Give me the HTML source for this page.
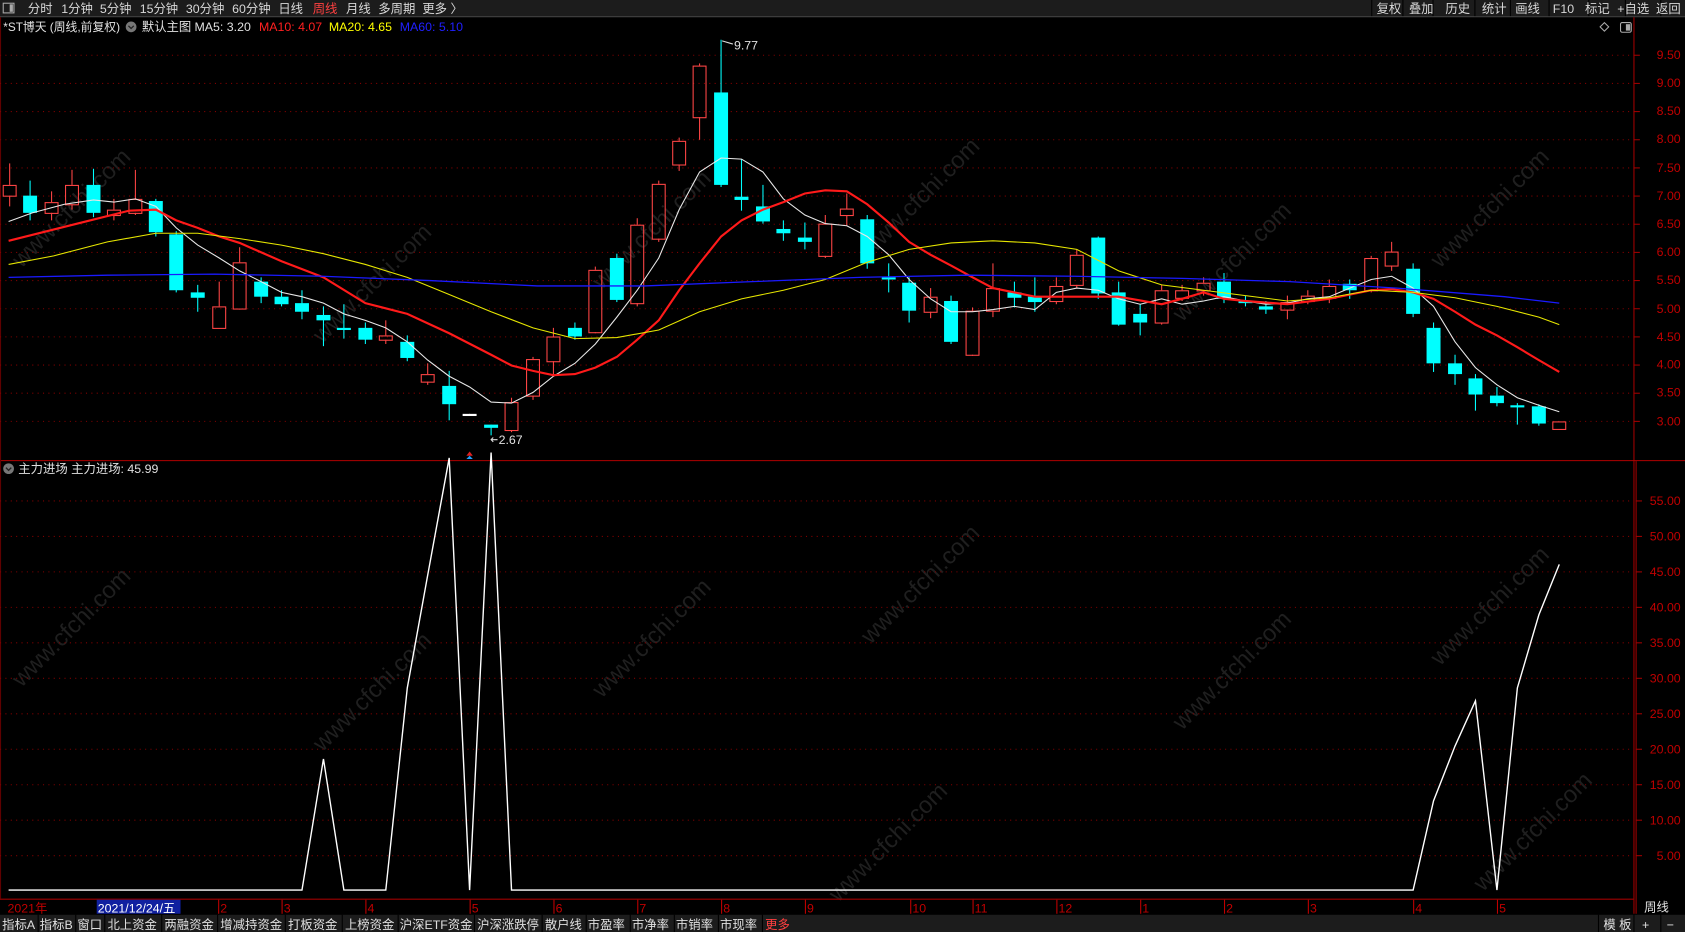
<!DOCTYPE html>
<html><head><meta charset="utf-8">
<style>
html,body{margin:0;padding:0;background:#000;width:1685px;height:932px;overflow:hidden}
svg{display:block}
text{font-family:"Liberation Sans","Noto Sans CJK SC",sans-serif}
</style></head>
<body>
<svg id="s" width="1685" height="932" viewBox="0 0 1568 867" preserveAspectRatio="none" xmlns="http://www.w3.org/2000/svg">
<rect width="1568" height="867" fill="#000"/>
<g fill="#1f1f1f" font-size="22">
<text transform="translate(20,250) rotate(-45)">www.cfchi.com</text>
<text transform="translate(300,320) rotate(-45)">www.cfchi.com</text>
<text transform="translate(560,270) rotate(-45)">www.cfchi.com</text>
<text transform="translate(810,240) rotate(-45)">www.cfchi.com</text>
<text transform="translate(1100,300) rotate(-45)">www.cfchi.com</text>
<text transform="translate(1340,250) rotate(-45)">www.cfchi.com</text>
<text transform="translate(20,640) rotate(-45)">www.cfchi.com</text>
<text transform="translate(300,700) rotate(-45)">www.cfchi.com</text>
<text transform="translate(560,650) rotate(-45)">www.cfchi.com</text>
<text transform="translate(810,600) rotate(-45)">www.cfchi.com</text>
<text transform="translate(1100,680) rotate(-45)">www.cfchi.com</text>
<text transform="translate(1340,620) rotate(-45)">www.cfchi.com</text>
<text transform="translate(780,840) rotate(-45)">www.cfchi.com</text>
<text transform="translate(1380,830) rotate(-45)">www.cfchi.com</text>
</g>
<rect x="0" y="0" width="1568" height="15" fill="#1c1c1c"/>
<line x1="0" y1="15.5" x2="1568" y2="15.5" stroke="#444"/>
<rect x="3" y="3" width="10" height="9" fill="none" stroke="#aaa" stroke-width="1"/>
<rect x="9" y="4" width="3" height="7" fill="#aaa"/>
<g fill="#d8d8d8" font-size="11.5">
<text x="26" y="12">分时</text><text x="57" y="12">1分钟</text><text x="93" y="12">5分钟</text>
<text x="130" y="12">15分钟</text><text x="173" y="12">30分钟</text><text x="216" y="12">60分钟</text>
<text x="259" y="12">日线</text><text x="291" y="12" fill="#ff4040">周线</text><text x="322" y="12">月线</text>
<text x="352" y="12">多周期</text><text x="393" y="12">更多 〉</text>
</g>
<g fill="#d8d8d8" font-size="11.5">
<rect x="1372" y="0" width="196" height="15" fill="#1c1c1c"/>
<line x1="1372.5" y1="0" x2="1372.5" y2="15" stroke="#000"/><line x1="1405.5" y1="0" x2="1405.5" y2="15" stroke="#000"/>
<line x1="1441.5" y1="0" x2="1441.5" y2="15" stroke="#000"/><line x1="1478.5" y1="0" x2="1478.5" y2="15" stroke="#000"/>
<line x1="1512.5" y1="0" x2="1512.5" y2="15" stroke="#000"/><line x1="1545.5" y1="0" x2="1545.5" y2="15" stroke="#000"/>
<line x1="1333.5" y1="0" x2="1333.5" y2="15" stroke="#000"/><line x1="1305.5" y1="0" x2="1305.5" y2="15" stroke="#000"/><line x1="1276.5" y1="0" x2="1276.5" y2="15" stroke="#000"/>
<text x="1281" y="12">复权</text><text x="1311" y="12">叠加</text><text x="1345" y="12">历史</text>
<text x="1379" y="12">统计</text><text x="1410" y="12">画线</text><text x="1445" y="12">F10</text>
<text x="1475" y="12">标记</text><text x="1505" y="12">+自选</text><text x="1541" y="12">返回</text>
</g>
<g font-size="11">
<text x="3" y="29" fill="#e0e0e0">*ST博天 (周线,前复权)</text>
<circle cx="122" cy="25" r="5" fill="#777"/><path d="M119.5 24 L122 26.5 L124.5 24" stroke="#222" fill="none" stroke-width="1.2"/>
<text x="132" y="29" fill="#e0e0e0" font-size="11.5">默认主图</text>
<text x="181" y="29" fill="#e0e0e0" font-size="11.5">MA5: 3.20</text>
<text x="241" y="29" fill="#ff2020" font-size="11.5">MA10: 4.07</text>
<text x="306" y="29" fill="#ffff00" font-size="11.5">MA20: 4.65</text>
<text x="372" y="29" fill="#2020ff" font-size="11.5">MA60: 5.10</text>
</g>
<path d="M1607 22 L1611 26 L1607 30 L1603 26 Z" transform="translate(-114,-1)" stroke="#aaa" fill="none"/>
<rect x="1508" y="21" width="10" height="9" rx="1.5" fill="none" stroke="#aaa"/><rect x="1513" y="22.5" width="4" height="6" fill="#aaa"/>
<line x1="1520.5" y1="16" x2="1520.5" y2="850" stroke="#a00000"/>
<line x1="0" y1="428.5" x2="1568" y2="428.5" stroke="#b00000"/>
<line x1="0" y1="836.5" x2="1520" y2="836.5" stroke="#a00000"/>
<line x1="1522.5" y1="429" x2="1522.5" y2="850" stroke="#a00000"/>
<line x1="0.5" y1="16" x2="0.5" y2="836" stroke="#600000"/>
<g id="grid"></g>
<g fill="#c00000" font-size="11.5" text-anchor="end">
<text x="1564" y="55">9.50</text><text x="1564" y="81">9.00</text><text x="1564" y="107">8.50</text><text x="1564" y="133">8.00</text>
<text x="1564" y="160">7.50</text><text x="1564" y="186">7.00</text><text x="1564" y="212">6.50</text><text x="1564" y="238">6.00</text>
<text x="1564" y="264">5.50</text><text x="1564" y="291">5.00</text><text x="1564" y="317">4.50</text><text x="1564" y="343">4.00</text>
<text x="1564" y="369">3.50</text><text x="1564" y="396">3.00</text>
<text x="1564" y="470">55.00</text><text x="1564" y="503">50.00</text><text x="1564" y="536">45.00</text><text x="1564" y="569">40.00</text>
<text x="1564" y="602">35.00</text><text x="1564" y="635">30.00</text><text x="1564" y="668">25.00</text><text x="1564" y="701">20.00</text>
<text x="1564" y="734">15.00</text><text x="1564" y="767">10.00</text><text x="1564" y="800">5.00</text>
</g>
<g id="cd"></g>
<g id="ln" fill="none"></g>
<text x="683" y="46" fill="#e0e0e0" font-size="11.5">9.77</text>
<path d="M672 38 L682 41" stroke="#ddd"/>
<text x="464" y="413" fill="#e0e0e0" font-size="11.5">2.67</text>
<path d="M457 409 L463 409 M459 407 L457 409 L459 411" stroke="#ddd" fill="none"/>
<path d="M434 424 L437 420 L440 424 Z" fill="#e02020"/><path d="M434 427 L437 424 L440 427 Z" fill="#20a0ff"/>
<circle cx="8" cy="436" r="5" fill="#777"/><path d="M5.5 435 L8 437.5 L10.5 435" stroke="#222" fill="none" stroke-width="1.2"/>
<text x="17" y="440" fill="#e0e0e0" font-size="11.5">主力进场  主力进场: 45.99</text>
<g fill="#c00000" font-size="11.5">
<text x="7" y="849">2021年</text>
<rect x="90" y="837" width="78" height="13" fill="#1020a0"/>
<text x="91" y="849" fill="#ffffff">2021/12/24/五</text>
<text x="205" y="849">2</text><text x="264" y="849">3</text><text x="342" y="849">4</text><text x="439" y="849">5</text>
<text x="517" y="849">6</text><text x="595" y="849">7</text><text x="673" y="849">8</text><text x="751" y="849">9</text>
<text x="849" y="849">10</text><text x="907" y="849">11</text><text x="985" y="849">12</text><text x="1063" y="849">1</text>
<text x="1141" y="849">2</text><text x="1219" y="849">3</text><text x="1317" y="849">4</text><text x="1395" y="849">5</text>
</g>
<g stroke="#c00000">
<path d="M203.5 837V850M262.5 837V850M340.5 837V850M437.5 837V850M515.5 837V850M593.5 837V850M671.5 837V850M749.5 837V850M847.5 837V850M905.5 837V850M983.5 837V850M1061.5 837V850M1139.5 837V850M1217.5 837V850M1315.5 837V850M1393.5 837V850"/>
</g>
<text x="1530" y="848" fill="#e0e0e0" font-size="11.5">周线</text>
<rect x="0" y="851" width="1568" height="16" fill="#1c1c1c"/>
<g fill="#e0e0e0" font-size="11.5">
<text x="2" y="864">指标A</text><text x="37" y="864">指标B</text><text x="72" y="864">窗口</text>
<text x="100" y="864">北上资金</text><text x="153" y="864">两融资金</text><text x="205" y="864">增减持资金</text>
<text x="268" y="864">打板资金</text><text x="321" y="864">上榜资金</text><text x="372" y="864">沪深ETF资金</text>
<text x="444" y="864">沪深涨跌停</text><text x="507" y="864">散户线</text><text x="547" y="864">市盈率</text>
<text x="588" y="864">市净率</text><text x="629" y="864">市销率</text><text x="670" y="864">市现率</text>
<text x="712" y="864" fill="#ff4040">更多</text>
<text x="1492" y="864">模 板</text><text x="1528" y="864">+</text><text x="1551" y="864">−</text>
</g>
<g stroke="#000">
<path d="M35.5 851V867M70.5 851V867M97.5 851V867M150.5 851V867M202.5 851V867M265.5 851V867M318.5 851V867M370.5 851V867M441.5 851V867M504.5 851V867M545.5 851V867M586.5 851V867M627.5 851V867M668.5 851V867M709.5 851V867M1487.5 851V867M1520.5 851V867M1545.5 851V867"/>
</g>
</svg>
<script>
const NS="http://www.w3.org/2000/svg";
function el(p,t,a){const e=document.createElementNS(NS,t);for(const k in a)e.setAttribute(k,a[k]);p.appendChild(e);return e;}
const g=document.getElementById('grid');
for(let k=0;k<=13;k++){const y=392-k*26.2;el(g,'line',{x1:0,x2:1518,y1:y,y2:y,stroke:'#800000','stroke-dasharray':'1 4'});el(g,'line',{x1:1520,x2:1526,y1:y,y2:y,stroke:'#a00000'});}
for(let v=5;v<=55;v+=5){const y=796-(v-5)*6.6;el(g,'line',{x1:0,x2:1518,y1:y,y2:y,stroke:'#800000','stroke-dasharray':'1 4'});el(g,'line',{x1:1522,x2:1528,y1:y,y2:y,stroke:'#a00000'});}
const C=[[9,172,182,152,192,'r'],[28,182,198,168,205,'c'],[48,188,198,178,205,'r'],[67,172,190,158,195,'r'],[87,172,198,157,202,'c'],[106,195,200,185,205,'r'],[126,185,198,158,200,'r'],[145,187,216,185,220,'c'],[164,218,270,215,272,'c'],[184,272,277,265,290,'c'],[204,285,305,262,305,'r'],[223,244,287,230,288,'r'],[243,262,276,258,282,'c'],[262,276,283,270,285,'c'],[281,282,290,270,297,'c'],[301,293,298,285,322,'c'],[320,305,306,283,315,'c'],[340,305,316,300,320,'c'],[359,312,316,298,320,'r'],[379,318,333,312,336,'c'],[398,348,355,338,358,'r'],[418,359,376,345,391,'c'],[437,385,386,385,386,'w'],[457,395,398,395,405,'c'],[476,374,400,370,402,'r'],[496,334,368,332,372,'r'],[515,313,336,305,350,'r'],[535,305,313,300,316,'c'],[554,251,309,248,310,'r'],[574,240,279,236,281,'c'],[593,209,282,203,285,'r'],[613,171,222,168,225,'r'],[632,131,153,128,159,'r'],[651,61,109,59,130,'r'],[671,86,172,37,174,'c'],[690,183,186,148,196,'c'],[710,192,206,172,208,'c'],[729,213,217,205,224,'c'],[749,221,225,207,232,'c'],[768,208,238,200,240,'r'],[788,194,200,180,210,'r'],[807,204,245,200,250,'c'],[827,258,260,245,272,'c'],[846,263,289,258,300,'c'],[866,276,290,268,296,'r'],[885,280,318,275,320,'c'],[905,289,330,286,331,'r'],[924,268,289,245,295,'r'],[944,272,277,262,286,'c'],[963,276,281,258,290,'c'],[983,266,280,258,283,'r'],[1002,237,265,232,268,'r'],[1022,221,273,220,278,'c'],[1041,272,302,262,303,'c'],[1061,292,300,283,312,'c'],[1081,270,300,265,302,'r'],[1100,270,277,265,280,'r'],[1120,263,270,258,275,'r'],[1139,262,278,254,282,'c'],[1159,280,282,275,285,'c'],[1178,285,288,280,292,'c'],[1198,281,288,275,297,'r'],[1217,275,280,270,283,'r'],[1237,266,277,260,282,'r'],[1256,264,270,260,278,'c'],[1276,240,270,238,272,'r'],[1295,234,247,225,252,'r'],[1315,250,292,245,295,'c'],[1334,305,338,300,346,'c'],[1354,338,348,330,358,'c'],[1373,352,367,348,382,'c'],[1393,368,375,360,378,'c'],[1412,377,378,375,395,'c'],[1432,378,394,376,396,'c'],[1451,392,399,392,399,'r']];
const cd=document.getElementById('cd');
C.forEach(([x,t,b,h,l,k])=>{const col=k=='r'?'#ff4545':k=='c'?'#00ffff':'#ffffff';
 if(k=='r'){el(cd,'line',{x1:x,x2:x,y1:h,y2:t,stroke:col});el(cd,'line',{x1:x,x2:x,y1:b,y2:l,stroke:col});el(cd,'rect',{x:x-6,y:t+.5,width:12,height:Math.max(b-t,1),fill:'none',stroke:col});}
 else{el(cd,'line',{x1:x,x2:x,y1:h,y2:l,stroke:col});el(cd,'rect',{x:x-6.5,y:t,width:13,height:Math.max(b-t,2),fill:col});}});
const ln=document.getElementById('ln');
function pl(pts,col,w){el(ln,'polyline',{points:pts,stroke:col,'stroke-width':w,fill:'none'});}
pl("8,206 30,198 60,190 87,186 106,188 126,185 145,192 164,212 184,228 204,240 223,252 243,262 262,272 281,276 301,282 320,292 340,298 359,305 379,318 398,335 418,350 437,360 457,374 476,375 496,365 515,350 535,338 554,320 574,295 593,270 613,240 632,195 651,160 671,147 690,148 710,160 729,185 749,200 768,208 788,210 807,220 827,237 846,260 866,278 885,290 905,290 924,288 944,285 963,288 983,272 1002,268 1022,270 1041,278 1061,283 1081,278 1100,283 1120,280 1139,276 1159,280 1178,283 1198,282 1217,278 1237,276 1256,268 1276,260 1295,257 1315,268 1334,285 1354,318 1373,342 1393,358 1412,370 1432,377 1451,383","#e8e8e8",1);
pl("8,224 40,216 80,206 120,196 145,195 164,205 184,212 204,220 223,226 262,243 301,258 340,282 379,292 418,310 457,330 476,340 496,345 515,349 535,348 554,342 574,332 593,316 613,298 632,270 651,245 671,220 690,205 710,195 729,188 749,180 768,177 788,178 807,190 827,207 846,225 866,237 885,247 905,258 924,268 944,272 963,276 983,276 1002,276 1041,276 1081,283 1100,278 1120,272 1139,278 1159,280 1198,283 1237,278 1276,270 1295,269 1315,272 1334,278 1354,290 1373,302 1393,312 1412,323 1432,335 1451,346","#ff1a1a",2);
pl("8,246 50,238 100,225 145,217 184,217 223,222 262,228 301,236 340,246 379,258 418,274 457,290 496,305 535,315 574,314 613,307 651,290 690,278 729,270 768,260 807,244 846,232 885,226 924,224 963,226 1002,232 1041,252 1081,265 1120,270 1159,275 1198,280 1237,277 1276,270 1315,272 1354,277 1393,285 1432,295 1451,302","#e6e600",1);
pl("8,258 100,256 200,255 300,257 400,261 500,266 600,266 700,262 800,258 900,256 1000,257 1100,259 1200,262 1300,268 1400,276 1451,282","#1a1aff",1.2);
pl("8,828 281,828 301,706 320,828 359,828 379,640 398,535 418,426 437,828 457,421 476,828 1315,828 1334,745 1354,694 1373,652 1393,828 1412,640 1432,572 1451,525","#ffffff",1.3);
</script>
</body></html>
